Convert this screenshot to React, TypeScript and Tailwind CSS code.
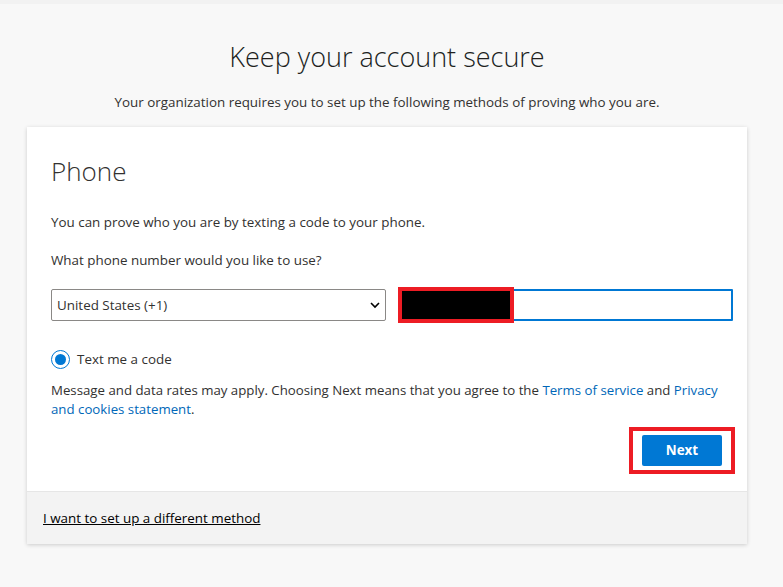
import React from "react";

export default function App() {
  const font = { fontFamily: '"Open Sans", "Noto Sans", sans-serif' };
  return (
    <div className="w-[783px] h-[587px] bg-[#f8f8f8] overflow-hidden text-[#323130]" style={font}>
      <div className="h-[4px] bg-[#f2f2f2]" />
      <div className="ml-[27px] w-[720px] flex flex-col">
        <h1 className="mt-[35px] text-center text-[27px] leading-[36px] font-light text-[#201f1e]">
          Keep your account secure
        </h1>
        <p className="mt-[17px] text-center text-[13.4px] leading-[20px] text-[#323130]">
          Your organization requires you to set up the following methods of proving who you are.
        </p>
        <div className="mt-[15px] bg-white shadow-[0_1px_4px_rgba(0,0,0,0.18)] flex flex-col">
          <div className="pl-[24px] pr-[14px] pt-[27px] pb-[17px] flex flex-col">
            <h2 className="text-[26px] leading-[34px] font-light text-[#323130]">Phone</h2>
            <p className="mt-[24px] text-[13.4px] leading-[20px]">
              You can prove who you are by texting a code to your phone.
            </p>
            <p className="mt-[18px] text-[13.4px] leading-[20px]">What phone number would you like to use?</p>
            <div className="mt-[19px] flex items-center gap-[12px]">
              <div className="w-[335px] h-[32px] border border-[#8a8886] rounded-[2px] flex items-center justify-between pl-[5px] pr-[4px] text-[13.4px]">
                <span>United States (+1)</span>
                <svg width="12" height="12" viewBox="0 0 12 12">
                  <path d="M2 4 L6 8 L10 4" fill="none" stroke="#000" strokeWidth="1.6" />
                </svg>
              </div>
              <div className="relative w-[335px] h-[32px] border-2 border-[#0078d4] rounded-[1px]">
                <div className="absolute left-[-2px] top-[-4px] w-[116px] h-[36px] border-[4px] border-[#ed1c24] bg-black" />
              </div>
            </div>
            <div className="mt-[28px] flex items-center gap-[7px]">
              <div className="w-[19px] h-[19px] rounded-full border border-[#0078d4] flex items-center justify-center">
                <div className="w-[11px] h-[11px] rounded-full bg-[#0078d4]" />
              </div>
              <span className="text-[13.4px] leading-[20px]">Text me a code</span>
            </div>
            <p className="mt-[12px] text-[13.25px] leading-[19px]">
              Message and data rates may apply. Choosing Next means that you agree to the{" "}
              <span className="text-[#0067b8]">Terms of service</span> and{" "}
              <span className="text-[#0067b8]">Privacy and cookies statement</span>.
            </p>
            <div className="mt-[8px] flex justify-end mr-[-2px]">
              <div className="border-[4px] border-[#ed1c24] px-[9px] py-[4px]">
                <button className="w-[80px] h-[31px] bg-[#0078d4] rounded-[2px] text-white text-[13.4px] font-bold">
                  Next
                </button>
              </div>
            </div>
          </div>
          <div className="border-t border-[#e6e6e6] bg-[#f3f3f3] h-[53px] flex items-center px-[16px]">
            <span className="text-[13.4px] underline text-[#000]">I want to set up a different method</span>
          </div>
        </div>
      </div>
    </div>
  );
}
